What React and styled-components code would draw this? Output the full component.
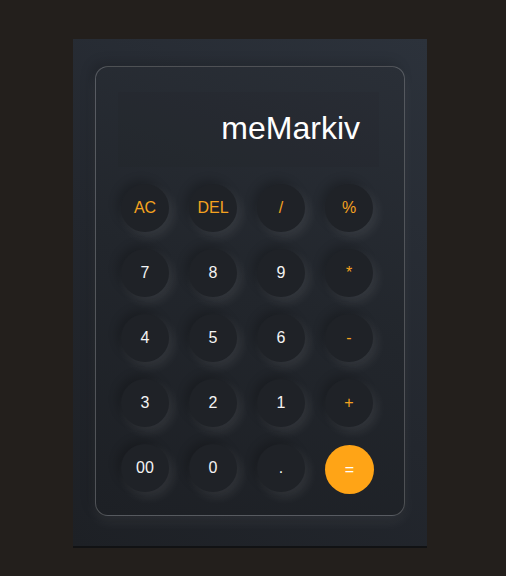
import React from "react";
import styled, { createGlobalStyle } from "styled-components";

const Global = createGlobalStyle`
  html, body { margin: 0; padding: 0; background: #231f1c; }
  body { font-family: "Liberation Sans", Arial, sans-serif; }
`;

const Page = styled.div`
  width: 506px;
  height: 576px;
  padding: 39px 0 0 73px;
  box-sizing: border-box;
`;

const Card = styled.div`
  width: 354px;
  height: 509px;
  box-sizing: border-box;
  padding: 27px 22px 0 22px;
  background: linear-gradient(215deg, #2c323b 0%, #23272e 55%, #1d2025 100%);
  border-bottom: 2px solid #111214;
`;

const Panel = styled.div`
  width: 310px;
  height: 450px;
  box-sizing: border-box;
  border: 1px solid rgba(255, 255, 255, 0.22);
  border-radius: 13px;
  padding: 25px 24px 0 22px;
  background: linear-gradient(200deg, #2a2f37 0%, #22262c 50%, #1d2025 100%);
  box-shadow: 0 6px 14px rgba(255, 255, 255, 0.06), -4px -4px 12px rgba(0, 0, 0, 0.15);
`;

const Display = styled.div`
  height: 75px;
  box-sizing: border-box;
  margin: 0 1px 0 0;
  display: flex;
  justify-content: flex-end;
  align-items: flex-start;
  padding: 18px 19px 0 0;
  background: rgba(0, 0, 0, 0.025);
  color: #ffffff;
  font-size: 32px;
  line-height: 37px;
`;

const Keys = styled.div`
  margin-top: 17px;
  margin-left: 3px;
  display: grid;
  grid-template-columns: repeat(4, 48px);
  grid-auto-rows: 48px;
  column-gap: 20px;
  row-gap: 17px;
`;

const Key = styled.button`
  width: 48px;
  height: 48px;
  border: none;
  border-radius: 50%;
  padding: 0;
  font-family: "Liberation Sans", Arial, sans-serif;
  font-size: 16px;
  color: ${(p) => (p.$op ? "#f5a21f" : "#f4f4f4")};
  background: ${(p) => (p.$eq ? "#ffa416" : "#1f2227")};
  box-shadow: ${(p) =>
    p.$eq
      ? "none"
      : "-4px -4px 10px rgba(0,0,0,0.2), 4px 5px 11px rgba(255,255,255,0.085)"};
  ${(p) => p.$eq && "width: 49px; height: 49px; margin-top: 1px; color: #fff;"}
`;

const keys = [
  ["AC", true], ["DEL", true], ["/", true], ["%", true],
  ["7"], ["8"], ["9"], ["*", true],
  ["4"], ["5"], ["6"], ["-", true],
  ["3"], ["2"], ["1"], ["+", true],
  ["00"], ["0"], ["."], ["=", false, true],
];

export default function App() {
  return (
    <Page>
      <Global />
      <Card>
        <Panel>
          <Display>meMarkiv</Display>
          <Keys>
            {keys.map(([label, op, eq]) => (
              <Key key={label} $op={op} $eq={eq}>
                {label}
              </Key>
            ))}
          </Keys>
        </Panel>
      </Card>
    </Page>
  );
}
